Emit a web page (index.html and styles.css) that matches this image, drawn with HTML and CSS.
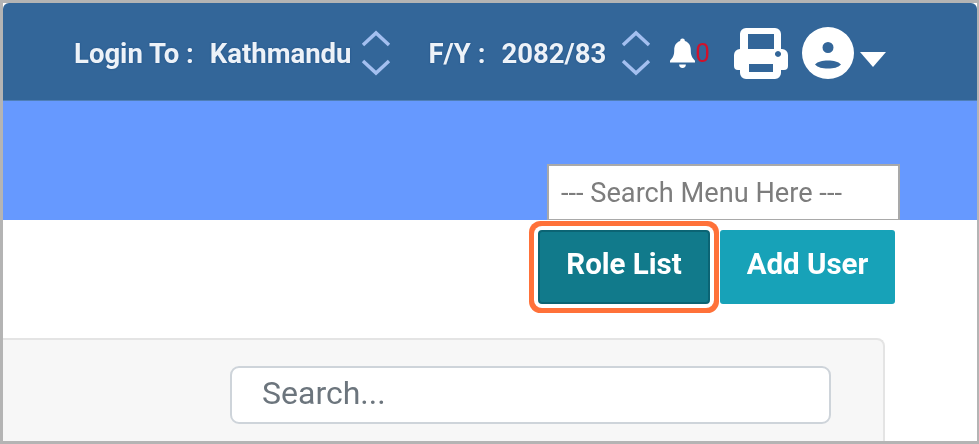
FILE: index.html
```html
<!DOCTYPE html>
<html lang="en">
<head>
  <meta charset="UTF-8">
  <title>Users</title>
  <link rel="stylesheet" href="styles.css">
</head>
<body>
  <div class="frame">
    <!-- Top bar -->
    <header class="topbar">
      <span class="top-label">Login To :</span>
      <span class="top-value branch">Kathmandu</span>
      <svg class="chevrons" viewBox="0 0 30 46"><path d="M2 15 L15 3 L28 15 M2 31 L15 43 L28 31"/></svg>
      <span class="top-label fy">F/Y :</span>
      <span class="top-value year">2082/83</span>
      <svg class="chevrons" viewBox="0 0 30 46"><path d="M2 15 L15 3 L28 15 M2 31 L15 43 L28 31"/></svg>
      <span class="bell-wrap">
        <svg class="bell" viewBox="0 0 26 32"><path d="M13 1a2.400 2.400 0 0 1 2.400 2.600C20 5 21.600 9 21.600 13c0 6 1.400 8 4.400 11v2H0v-2c3-3 4.400-5 4.400-11 0-4 1.600-8 6.200-9.400A2.400 2.400 0 0 1 13 1zM9.500 28h7a3.500 3.500 0 0 1-7 0z"/></svg>
        <span class="bell-count">0</span>
      </span>
      <svg class="printer" viewBox="0 0 54 52"><path fill-rule="evenodd" d="M6 22V7a6 6 0 0 1 6-6h29a6 6 0 0 1 6 6v15h1a6 6 0 0 1 6 6v11a4 4 0 0 1-4 4h-3v3a6 6 0 0 1-6 6H12a6 6 0 0 1-6-6v-3H4a4 4 0 0 1-4-4V28a6 6 0 0 1 6-6zM14 7v15h26V7zM15 37v8h24v-8zM44 24a3 3 0 1 0 .01 0z"/></svg>
      <svg class="avatar" viewBox="0 0 52 52"><path fill-rule="evenodd" d="M26 0a26 26 0 1 1 0 52 26 26 0 0 1 0-52zM26 15a5.500 5.500 0 1 0 0 11 5.500 5.500 0 0 0 0-11zM13 37.500c3-3 7-4 13-4s10 1 13 4c-3 3-7 4-13 4s-10-1-13-4z"/></svg>
      <span class="caret"></span>
    </header>

    <!-- Blue band with menu search -->
    <div class="band">
      <input class="menu-search" type="text" placeholder="--- Search Menu Here ---">
    </div>

    <div class="actions">
      <button class="btn btn-active">Role List</button>
      <button class="btn">Add User</button>
    </div>

    <section class="card">
      <input class="table-search" type="text" placeholder="Search...">
    </section>
  </div>
</body>
</html>
```

FILE: styles.css
```css
* {
  box-sizing: border-box;
}
html, body {
  margin: 0;
  padding: 0;
  background: #fff;
}
body {
  font-family: Roboto, "Liberation Sans", sans-serif;
}
/* the whole shot is an upscaled capture, so it is a little soft */
.frame {
  width: 979px;
  height: 444px;
  border: 3px solid #b4b4b4;
  border-right-width: 2px;
  overflow: hidden;
  background: #fff;
  filter: blur(0.7px);
}

/* Top bar */
.topbar {
  height: 98px;
  display: flex;
  align-items: center;
  padding: 3px 0 0 71px;
  background: #336699;
  border-bottom: 1px solid #4f7fb8;
  border-radius: 6px 6px 0 0;
  color: #edf2f8;
  font-size: 27.5px;
  font-weight: 700;
}
.top-label,
.top-value {
  white-space: nowrap;
  text-shadow: 0 0 2px #1d4f86;
}
.branch {
  margin-left: 16px;
}
.fy {
  margin-left: 38px;
}
.year {
  margin-left: 16px;
}
.chevrons {
  width: 30px;
  height: 46px;
  margin-left: 9px;
  fill: none;
  stroke: #a3bff0;
  stroke-width: 3.5;
}
.year + .chevrons {
  margin-left: 15px;
}
.bell-wrap {
  display: flex;
  align-items: center;
  margin-left: 19px;
}
.bell {
  width: 25px;
  height: 32px;
  fill: #fff;
}
.bell-count {
  color: #d0112b;
  font-size: 26px;
  font-weight: 400;
}
.printer {
  width: 54px;
  height: 52px;
  margin-left: 24px;
  fill: #fff;
}
.avatar {
  width: 52px;
  height: 52px;
  margin-left: 14px;
  fill: #fff;
}
.caret {
  width: 0;
  height: 0;
  margin: 12px 0 0 6px;
  border-left: 13px solid transparent;
  border-right: 13px solid transparent;
  border-top: 15px solid #fff;
}

/* Blue band */
.band {
  height: 119px;
  display: flex;
  justify-content: flex-end;
  align-items: flex-end;
  padding-right: 77px;
  background: #6699ff;
}
.menu-search {
  width: 353px;
  height: 56px;
  padding: 0 12px;
  border: 2px solid #a9a9a9;
  border-bottom-width: 1px;
  background: #fff;
  font-family: inherit;
  font-size: 27.2px;
  outline: none;
}
.menu-search::placeholder {
  color: #7d7d7d;
  opacity: 1;
}

/* Buttons */
.actions {
  display: flex;
  justify-content: flex-end;
  gap: 10px;
  padding: 10px 82px 0 0;
}
.btn {
  width: 175px;
  height: 74px;
  padding: 0 0 6px;
  border: none;
  border-radius: 3px;
  background: #17a2b8;
  color: #fff;
  font-family: inherit;
  font-size: 29.5px;
  font-weight: 700;
}
.btn-active {
  width: 172px;
  background: #117a8b;
  border: 2px solid #0b6474;
  box-shadow: 0 0 0 4px #fff, 0 0 0 9px #ff7139;
  border-radius: 4px;
}

/* Card */
.card {
  height: 120px;
  margin: 34px 92px 0 0;
  padding: 26px 52px 0 0;
  display: flex;
  justify-content: flex-end;
  background: #f7f7f7;
  border: 2px solid #e4e4e4;
  border-left: none;
  border-bottom: none;
  border-radius: 0 8px 0 0;
}
.table-search {
  width: 601px;
  height: 58px;
  padding: 0 30px 4px;
  border: 2px solid #ced4da;
  border-radius: 9px;
  background: #fff;
  font-family: inherit;
  font-size: 32px;
  outline: none;
}
.table-search::placeholder {
  color: #6c757d;
  opacity: 1;
}
```
